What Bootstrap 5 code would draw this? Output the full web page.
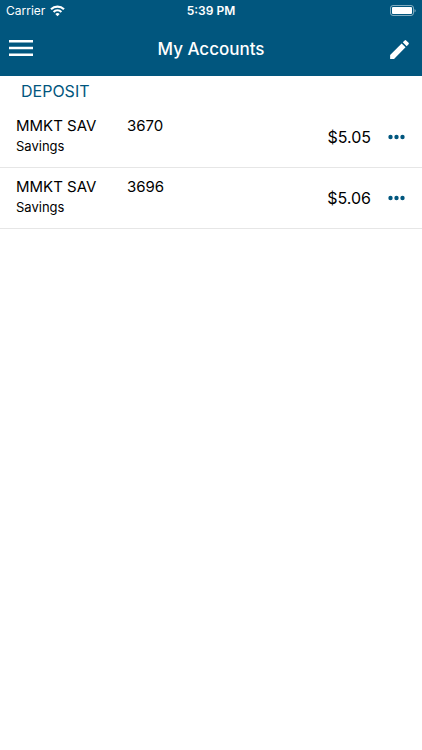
<!DOCTYPE html>
<html lang="en">
<head>
<meta charset="utf-8">
<meta name="viewport" content="width=device-width, initial-scale=1">
<title>My Accounts</title>
<link href="https://cdn.jsdelivr.net/npm/bootstrap@5.3.0/dist/css/bootstrap.min.css" rel="stylesheet">
<style>
  body { font-family: Inter, "Liberation Sans", sans-serif; color: #000; background: #fff; }
  svg { display: block; }
  .app-top { background: #01567e; color: #fff; }
  .status-bar { font-size: 12px; line-height: 22px; padding: 0 6px; }
  .title-bar { height: 54px; padding: 0 8px; }
  .title-bar h1 { font-size: 17px; line-height: 24px; font-weight: 500; }
  .menu-button { margin-bottom: 2px; }
  .edit-button { margin-right: 2px; }
  .side { flex: 1 1 0; }
  .section-title { font-size: 16px; line-height: 20px; padding: 5px 21px 6px; color: #01567e; }
  .account { height: 61px; padding: 0 16px; border-bottom: 1px solid #e6e6e6; }
  .account-name { font-size: 15px; line-height: 22px; }
  .account-label { width: 111px; }
  .account-kind { font-size: 13px; line-height: 18px; }
  .account-amount { font-size: 16px; line-height: 22px; }
  .more { margin-left: 16px; }
</style>
</head>
<body>
<header class="app-top">
  <div class="status-bar d-flex align-items-center">
    <div class="side d-flex align-items-center gap-1">
      <span>Carrier</span>
      <svg width="17" height="12" viewBox="0 0 17 12" fill="none" stroke="#fff" stroke-width="2.2" aria-hidden="true">
        <path d="M2 4.2a9.5 9.5 0 0 1 13 0M4.6 7a5.7 5.7 0 0 1 7.800 0"/>
        <path d="M8.5 11.3 6.3 9a3.2 3.2 0 0 1 4.400 0Z" fill="#fff" stroke="none"/>
      </svg>
    </div>
    <span class="fw-semibold">5:39 PM</span>
    <div class="side d-flex justify-content-end">
      <svg width="27" height="12" viewBox="0 0 27 12" aria-hidden="true">
        <rect x="1.5" y=".5" width="23" height="10" rx="2.5" fill="none" stroke="#fff" stroke-opacity=".5"/>
        <rect x="3" y="2" width="20" height="7" rx="1" fill="#fff"/>
        <path d="M25.5 4a1.8 1.8 0 0 1 0 3.4Z" fill="#fff" fill-opacity=".5"/>
      </svg>
    </div>
  </div>
  <nav class="title-bar d-flex align-items-center" aria-label="Main">
    <div class="side d-flex">
      <button type="button" class="btn p-0 border-0 menu-button" aria-label="Menu">
        <svg width="25" height="18" viewBox="0 0 25 18" fill="#fff"><path d="M1 1h24v2.6H1zM1 7.7h24v2.6H1zM1 14.4h24v2.6H1z"/></svg>
      </button>
    </div>
    <h1 class="m-0">My Accounts</h1>
    <div class="side d-flex justify-content-end">
      <button type="button" class="btn p-0 border-0 edit-button" aria-label="Edit">
        <svg width="25" height="25" viewBox="0 0 24 24" fill="#fff"><path d="M3 17.25V21h3.75L17.81 9.94l-3.75-3.75L3 17.25zM20.71 7.04a1 1 0 0 0 0-1.41l-2.34-2.34a1 1 0 0 0-1.41 0l-1.83 1.83 3.75 3.75 1.83-1.83z"/></svg>
      </button>
    </div>
  </nav>
</header>
<main>
  <h2 class="section-title fw-normal m-0">DEPOSIT</h2>
  <ul class="list-unstyled m-0">
    <li class="account d-flex align-items-center">
      <div class="flex-grow-1 pb-1">
        <div class="account-name d-flex"><span class="account-label">MMKT SAV</span><span>3670</span></div>
        <div class="account-kind">Savings</div>
      </div>
      <span class="account-amount">$5.05</span>
      <button type="button" class="btn p-0 border-0 more" aria-label="More options for account 3670">
        <svg width="19" height="8" viewBox="0 0 19 8" fill="#01567e"><circle cx="3.5" cy="4" r="2.2"/><circle cx="9.5" cy="4" r="2.2"/><circle cx="15.5" cy="4" r="2.2"/></svg>
      </button>
    </li>
    <li class="account d-flex align-items-center">
      <div class="flex-grow-1 pb-1">
        <div class="account-name d-flex"><span class="account-label">MMKT SAV</span><span>3696</span></div>
        <div class="account-kind">Savings</div>
      </div>
      <span class="account-amount">$5.06</span>
      <button type="button" class="btn p-0 border-0 more" aria-label="More options for account 3696">
        <svg width="19" height="8" viewBox="0 0 19 8" fill="#01567e"><circle cx="3.5" cy="4" r="2.2"/><circle cx="9.5" cy="4" r="2.2"/><circle cx="15.5" cy="4" r="2.2"/></svg>
      </button>
    </li>
  </ul>
</main>
<script src="https://cdn.jsdelivr.net/npm/bootstrap@5.3.0/dist/js/bootstrap.bundle.min.js"></script>
</body>
</html>
